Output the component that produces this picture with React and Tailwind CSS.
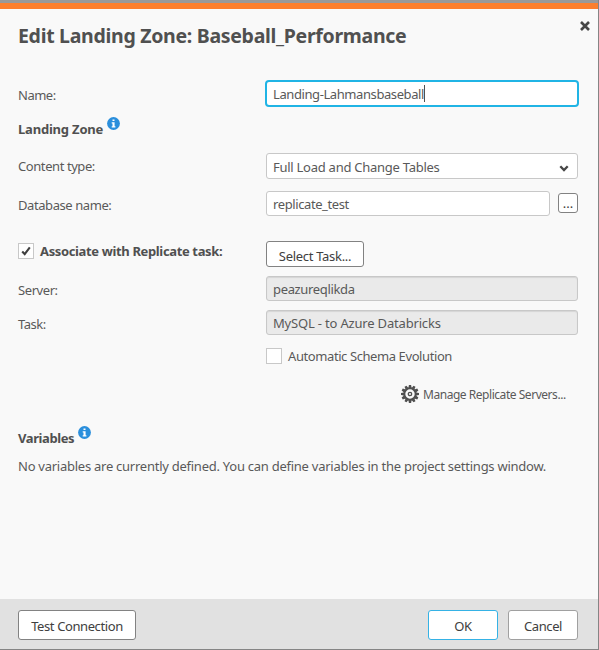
import React from 'react';

function InfoIcon({ className }) {
  return (
    <svg viewBox="0 0 13 13" className={`h-[13px] w-[13px] shrink-0 ${className}`}>
      <circle cx="6.5" cy="6.5" r="6.4" fill="#2b8fdc" />
      <path d="M5.5 2.4h2v1.7h-2zM4.7 5.2h2.9v4h.8v1.2H4.7V9.2h.8V6.4h-.8z" fill="#fff" />
    </svg>
  );
}

function GearIcon() {
  const teeth = [0, 30, 60, 90, 120, 150, 180, 210, 240, 270, 300, 330];
  return (
    <svg viewBox="0 0 18 18" className="h-[18px] w-[18px] shrink-0">
      {teeth.map((a) => (
        <path key={a} d="M7.9 0h2.2l.5 3H7.4z" fill="#505050" transform={`rotate(${a} 9 9)`} />
      ))}
      <circle cx="9" cy="9" r="5.7" fill="none" stroke="#505050" strokeWidth="2" />
      <circle cx="9" cy="9" r="1.7" fill="none" stroke="#505050" strokeWidth="1.3" />
    </svg>
  );
}

function Label({ children, className }) {
  return <div className={`w-[248px] shrink-0 whitespace-nowrap leading-[18px] ${className}`}>{children}</div>;
}

const readonlyField =
  'h-[25px] w-[312px] rounded-[3px] border border-[#c8c8c8] bg-[#eaeaea] pl-[6px] pt-[3px] leading-[18px] shadow-[inset_0_1px_1px_#d5d5d5] whitespace-nowrap';

export default function App() {
  return (
    <div className="flex h-[650px] w-[599px] flex-col overflow-hidden border-r border-b border-[#858585] bg-[#f9f9f9] font-['Noto_Sans','Open_Sans',sans-serif] text-[13px] text-[#595959]">
      <div className="h-[3px] shrink-0 bg-[#999]" />
      <div className="h-[6px] shrink-0 bg-[#fc7f2d]" />
      <header className="flex h-[71px] shrink-0 justify-between pl-[18px] pr-[8px]">
        <h1 className="mt-[14px] whitespace-nowrap text-[19.5px] font-bold leading-[26px] tracking-[-0.3px] text-[#505050]">
          Edit Landing Zone: Baseball_Performance
        </h1>
        <svg viewBox="0 0 10 10" className="mt-[12px] h-[10px] w-[10px]">
          <path d="M1 1l8 8M9 1L1 9" stroke="#464646" strokeWidth="2.6" />
        </svg>
      </header>

      <main className="flex grow flex-col pl-[18px]">
        <div className="flex h-[27px]">
          <Label className="pt-[6px] tracking-[-0.5px]">Name:</Label>
          <div className="-ml-px flex h-[27px] w-[314px] rounded-[4px] border-2 border-[#20b4e5] bg-white pl-[6px] pt-[3px] leading-[18px] tracking-[-0.41px]">
            <span>Landing-Lahmansbaseball</span>
            <span className="h-[17px] w-px bg-[#505050]" />
          </div>
        </div>

        <div className="mt-[10px] flex h-[36px]">
          <span className="mt-[3px] whitespace-nowrap font-bold leading-[18px] tracking-[-0.2px] text-[#505050]">Landing Zone</span>
          <InfoIcon className="ml-[4px]" />
        </div>

        <div className="flex h-[26px]">
          <Label className="pt-[4px] tracking-[-0.42px]">Content type:</Label>
          <div className="flex h-[26px] w-[312px] justify-between rounded-[3px] border border-[#c8c8c8] bg-white pl-[6px] pr-[8px] pt-[4px] leading-[18px] tracking-[-0.26px]">
            <span>Full Load and Change Tables</span>
            <svg viewBox="0 0 10 7" className="mt-[7px] h-[7px] w-[10px]">
              <path d="M1.3 1.2L5 5l3.7-3.8" fill="none" stroke="#464646" strokeWidth="2.3" />
            </svg>
          </div>
        </div>

        <div className="mt-[12px] flex h-[25px]">
          <Label className="pt-[5px] tracking-[-0.42px]">Database name:</Label>
          <div className="h-[25px] w-[284px] rounded-[3px] border border-[#c8c8c8] bg-white pl-[6px] pt-[3px] leading-[18px] tracking-[-0.4px]">replicate_test</div>
          <button className="ml-[8px] mt-[2px] h-[20px] w-[20px] rounded-[3px] border border-[#828282] bg-white text-center leading-[18px] text-[#404040]">...</button>
        </div>

        <div className="mt-[25px] flex h-[26px]">
          <div className="flex w-[248px] shrink-0 pt-[2px]">
            <div className="flex h-[16px] w-[16px] shrink-0 items-center justify-center border border-[#c8c8c8] bg-white">
              <svg viewBox="0 0 10 10" className="h-[10px] w-[10px]">
                <path d="M1.2 5.5l2.5 2.6L8.8 1.4" fill="none" stroke="#404040" strokeWidth="2.1" />
              </svg>
            </div>
            <span className="-mt-px ml-[6px] whitespace-nowrap font-bold leading-[18px] tracking-[-0.36px] text-[#505050]">Associate with Replicate task:</span>
          </div>
          <button className="h-[26px] w-[98px] whitespace-nowrap rounded-[3px] border border-[#828282] bg-white pt-[4px] leading-[18px] tracking-[-0.3px] text-[#404040]">Select Task...</button>
        </div>

        <div className="mt-[9px] flex h-[25px]">
          <Label className="pt-[5px] tracking-[-0.42px]">Server:</Label>
          <div className={`${readonlyField} tracking-[-0.35px]`}>peazureqlikda</div>
        </div>
        <div className="mt-[9px] flex h-[25px]">
          <Label className="pt-[5px] tracking-[-0.5px]">Task:</Label>
          <div className={`${readonlyField} tracking-[-0.18px]`}>MySQL - to Azure Databricks</div>
        </div>

        <div className="ml-[248px] mt-[13px] flex h-[18px]">
          <div className="h-[16px] w-[16px] border border-[#c8c8c8] bg-white" />
          <span className="-mt-px ml-[6px] whitespace-nowrap leading-[18px] tracking-[-0.41px]">Automatic Schema Evolution</span>
        </div>
        <div className="ml-[383px] mt-[19px] flex h-[18px]">
          <GearIcon />
          <span className="ml-[4px] whitespace-nowrap text-[12px] leading-[20px] tracking-[-0.46px]">Manage Replicate Servers...</span>
        </div>

        <div className="mt-[23px] flex h-[31px]">
          <span className="mt-[3px] whitespace-nowrap font-bold leading-[18px] tracking-[-0.4px] text-[#505050]">Variables</span>
          <InfoIcon className="ml-[4px]" />
        </div>
        <p className="whitespace-nowrap leading-[18px] tracking-[-0.255px]">No variables are currently defined. You can define variables in the project settings window.</p>
      </main>

      <footer className="flex h-[50px] shrink-0 bg-[#e1e1e1] pl-[18px] pt-[11px] text-[#404040]">
        <button className="h-[30px] w-[118px] whitespace-nowrap rounded-[3px] border border-[#828282] bg-white pt-px leading-[18px] tracking-[-0.4px]">Test Connection</button>
        <button className="ml-[292px] h-[30px] w-[70px] rounded-[3px] border border-[#35b2e5] bg-white pt-px leading-[18px] tracking-[-0.3px]">OK</button>
        <button className="ml-[10px] h-[30px] w-[70px] rounded-[3px] border border-[#a0a0a0] bg-white pt-px leading-[18px] tracking-[-0.4px]">Cancel</button>
      </footer>
    </div>
  );
}
